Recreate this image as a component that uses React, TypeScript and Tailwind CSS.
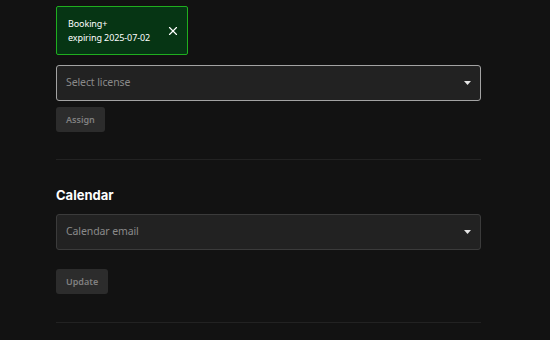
import { X } from "lucide-react";

const Caret = () => (
  <svg width="7" height="4" viewBox="0 0 7 4" className="shrink-0">
    <path d="M0 0h7L3.5 4z" fill="#e5e5e5" />
  </svg>
);

const SelectBox = ({ placeholder, active }: { placeholder: string; active?: boolean }) => (
  <div
    className={`flex h-[36px] items-center justify-between rounded-[3px] border bg-[#222222] pl-[9px] pr-[9px] ${
      active ? "border-[#a3a3a3]" : "border-[#3b3b3b]"
    }`}
  >
    <span className="text-[10.5px] tracking-[-0.1px] text-[#8a8a8a]">{placeholder}</span>
    <Caret />
  </div>
);

const Button = ({ children }: { children: string }) => (
  <button className="h-[25px] rounded-[3px] bg-[#2c2c2c] px-[10px] text-[9px] font-semibold text-[#808080]">
    {children}
  </button>
);

export default function App() {
  return (
    <div
      className="h-[340px] w-[550px] overflow-hidden bg-[#121212] text-white"
      style={{ fontFamily: '"Noto Sans", "Open Sans", sans-serif' }}
    >
      <div className="ml-[56px] w-[425px] pt-[6px]">
        <div className="flex h-[49px] w-[132px] items-center justify-between rounded-[2px] border border-[#1fae1f] bg-[#063514] pl-[11px] pr-[7px]">
          <div className="text-[9px] leading-[14px] tracking-[-0.1px] text-white">
            <div>Booking+</div>
            <div>expiring 2025-07-02</div>
          </div>
          <X size={14} strokeWidth={2} color="#ffffff" />
        </div>

        <div className="mt-[10px]">
          <SelectBox placeholder="Select license" active />
        </div>
        <div className="mt-[6px] flex">
          <Button>Assign</Button>
        </div>

        <div className="mt-[27px] h-px bg-[#222222]" />

        <h2
          className="mt-[26px] text-[13px] font-bold leading-[18px] text-white"
          style={{ fontFamily: '"Inter", "Noto Sans", sans-serif' }}
        >
          Calendar
        </h2>
        <div className="mt-[10px]">
          <SelectBox placeholder="Calendar email" />
        </div>
        <div className="mt-[19px] flex">
          <Button>Update</Button>
        </div>

        <div className="mt-[28px] h-px bg-[#222222]" />
      </div>
    </div>
  );
}
